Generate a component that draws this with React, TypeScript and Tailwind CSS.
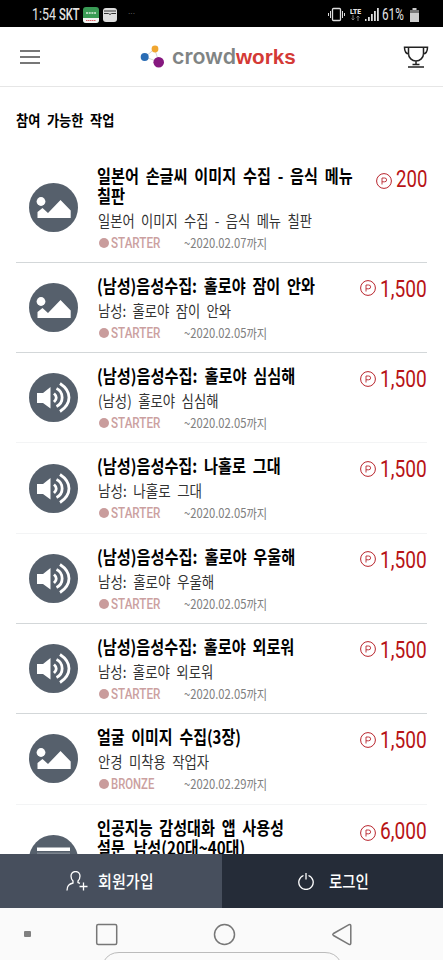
import { useLayoutEffect, useRef, useState } from "react";

type Kind = "image" | "sound" | "text";
type Line = [text: string, width: number];

interface Task {
  kind: Kind;
  title: Line[];
  desc?: Line;
  level?: Line;
  until?: string;
  price: Line;
  faint?: boolean;
}

const TASKS: Task[] = [
  { kind: "image", title: [["일본어 손글씨 이미지 수집 - 음식 메뉴", 256], ["칠판", 28]], desc: ["일본어 이미지 수집 - 음식 메뉴 칠판", 214], level: ["STARTER", 49], until: "~2020.02.07까지", price: ["200", 31] },
  { kind: "image", title: [["(남성)음성수집: 홀로야 잠이 안와", 218]], desc: ["남성: 홀로야 잠이 안와", 133], level: ["STARTER", 49], until: "~2020.02.05까지", price: ["1,500", 47] },
  { kind: "sound", title: [["(남성)음성수집: 홀로야 심심해", 198]], desc: ["(남성) 홀로야 심심해", 121], level: ["STARTER", 49], until: "~2020.02.05까지", price: ["1,500", 47], faint: true },
  { kind: "sound", title: [["(남성)음성수집: 나홀로 그대", 184]], desc: ["남성: 나홀로 그대", 104], level: ["STARTER", 49], until: "~2020.02.05까지", price: ["1,500", 47], faint: true },
  { kind: "sound", title: [["(남성)음성수집: 홀로야 우울해", 198]], desc: ["남성: 홀로야 우울해", 116], level: ["STARTER", 49], until: "~2020.02.05까지", price: ["1,500", 47] },
  { kind: "sound", title: [["(남성)음성수집: 홀로야 외로워", 197]], desc: ["남성: 홀로야 외로워", 115], level: ["STARTER", 49], until: "~2020.02.05까지", price: ["1,500", 47] },
  { kind: "image", title: [["얼굴 이미지 수집(3장)", 144]], desc: ["안경 미착용 작업자", 111], level: ["BRONZE", 43], until: "~2020.02.29까지", price: ["1,500", 47], faint: true },
  { kind: "text", title: [["인공지능 감성대화 앱 사용성", 187], ["설문_남성(20대~40대)", 148]], price: ["6,000", 47] },
];

// Condenses a single line of text to the given width
function Fit({ w, className = "", children }: { w: number; className?: string; children: string }) {
  const ref = useRef<HTMLSpanElement>(null);
  const [scale, setScale] = useState(1);
  useLayoutEffect(() => {
    if (ref.current) setScale(w / ref.current.offsetWidth);
  }, [w, children]);
  return (
    <span className={`block shrink-0 whitespace-nowrap ${className}`} style={{ width: w }}>
      <span ref={ref} className="inline-block origin-left" style={{ transform: `scaleX(${scale})` }}>{children}</span>
    </span>
  );
}

function KindIcon({ kind }: { kind: Kind }) {
  return (
    <svg viewBox="0 0 49 49" className="ml-[13px] h-[49px] w-[49px] shrink-0">
      <circle cx="24.5" cy="24.5" r="24.5" fill="#56606c" />
      {kind === "image" && (
        <g fill="#fff">
          <circle cx="12" cy="18.5" r="4.4" />
          <path d="M8.5 35V29l5-4 5.500 5L31.500 17 41.700 27.500V35z" />
        </g>
      )}
      {kind === "sound" && (
        <>
          <path d="M8 20h6L21.500 14v21.500L14 30H8z" fill="#fff" />
          <g fill="none" stroke="#fff" strokeWidth="2.800">
            <path d="M25 20.500q4.500 4 0 8.500" />
            <path d="M27.500 15.500a10 10 0 0 1 0 18" />
            <path d="M31 10.500q9 6 9 14t-9 14" />
          </g>
        </>
      )}
      {kind === "text" && (
        <>
          <path d="M8 12.500h33V16H8z" fill="#fff" />
          <path d="M8 17.500h33V20H8z" fill="#7c848e" />
        </>
      )}
    </svg>
  );
}

function TaskRow({ task }: { task: Task }) {
  const tall = task.title.length > 1;
  return (
    <li className={`flex border-b ${task.faint ? "border-[#f3f4f5]" : "border-[#d3d7d9]"} ${tall ? "h-[110.300px]" : "h-[90.300px]"}`}>
      <div className="flex w-[81px] shrink-0 items-center">
        <KindIcon kind={task.kind} />
      </div>
      <div className="flex-1 pt-[12px]">
        {task.title.map(([text, w]) => (
          <Fit key={text} w={w} className="h-5 text-[18px] leading-5 font-bold text-black [word-spacing:4px]">{text}</Fit>
        ))}
        {task.desc && <Fit w={task.desc[1]} className="mt-[5px] ml-px h-5 text-[15.500px] leading-5 text-[#333] [word-spacing:4px]">{task.desc[0]}</Fit>}
        {task.level && (
          <div className="mt-[3px] ml-[2px] flex h-5 items-center">
            <i className="h-[10px] w-[10px] rounded-full bg-[#c99c9c]" />
            <div className="ml-[2px] w-[73px]">
              <Fit w={task.level[1]} className="font-[Roboto] text-[15px] leading-5 font-medium text-[#cba0a0]">{task.level[0]}</Fit>
            </div>
            <Fit w={83} className="text-[13px] leading-5 text-[#808080]">{task.until!}</Fit>
          </div>
        )}
      </div>
      <div className="flex h-8 items-center gap-[4px] pt-[20px]">
        <svg viewBox="0 0 16 16" className={`h-4 w-4 ${tall ? "mt-[4px]" : "mb-px"}`} fill="none" stroke="#b8242c">
          <circle cx="8" cy="8" r="7.400" />
          <path d="M6 11.500V5h2.700a1.900 1.900 0 0 1 0 3.800H6" strokeWidth=".9" />
        </svg>
        <Fit w={task.price[1]} className="font-[Roboto] text-[24px] leading-6 text-[#b81416]">{task.price[0]}</Fit>
      </div>
    </li>
  );
}

function StatusBar() {
  return (
    <div className="flex h-[27px] shrink-0 items-center bg-black pt-[2px] pl-8 font-[Roboto] text-[#e4e4e4]">
      <Fit w={24} className="text-[16px]">1:54</Fit>
      <Fit w={21} className="ml-[3px] text-[16px] font-medium">SKT</Fit>
      <svg viewBox="0 0 16 16" className="ml-[3px] h-4 w-4">
        <rect width="16" height="16" rx="3" fill="#399b55" />
        <path d="M0 11h16v2a3 3 0 0 1-3 3H3a3 3 0 0 1-3-3z" fill="#f4f4f4" />
        <path d="M3 6h10" stroke="#d9eedd" strokeWidth="1.500" strokeDasharray="2 .7" />
        <path d="M3 13.500h10" stroke="#d66" strokeDasharray="1.500 .5" />
      </svg>
      <svg viewBox="0 0 14 14" className="ml-[4px] h-[14px] w-[14px]">
        <rect width="14" height="14" rx="3" fill="#ddd" />
        <path d="M1 3h12M1 5.500h4.500q1.500 2 3 0H13" fill="none" stroke="#333" />
      </svg>
      <span className="ml-[11px] text-[9px] text-[#777]">···</span>
      <svg viewBox="0 0 17 16" className="ml-auto h-4 w-[17px]" fill="none" stroke="#ddd">
        <rect x="4.500" y="1.500" width="8" height="12" rx="1" strokeWidth="1.300" />
        <path d="M2.500 4v7M.5 6v3M14.500 4v7M16.500 6v3" />
      </svg>
      <div className="ml-[5px] flex w-[11px] flex-col items-center">
        <Fit w={11} className="h-[7px] text-[8px] leading-[7px] font-black">LTE</Fit>
        <svg viewBox="0 0 9 6" className="h-[6px] w-[9px]" fill="none" stroke="#888" strokeWidth=".9">
          <path d="M2 0v5M.5 3.500 2 5l1.500-1.500M7 6V1M5.500 2.500 7 1l1.500 1.500" />
        </svg>
      </div>
      <svg viewBox="0 0 14 13" className="ml-[4px] h-[13px] w-[14px]" fill="#ddd">
        <path d="M0 11h1.500v2H0zM3 9h1.800v4H3zM6 6h1.800v7H6zM9 3h1.800v10H9zM12 0h1.800v13H12z" />
      </svg>
      <Fit w={22} className="ml-[3px] text-[16px]">61%</Fit>
      <svg viewBox="0 0 9 14" className="mr-[24px] ml-[6px] h-[14px] w-[9px]">
        <path d="M2.500 0h4v2H9v12H0V2h2.500z" fill="#ccc" />
        <path d="M0 2h9v3H0z" fill="#777" />
      </svg>
    </div>
  );
}

function Header() {
  return (
    <header className="flex h-[60px] shrink-0 items-center border-b border-[#e6e6e6] pr-[14px] pl-5">
      <div className="flex w-5 flex-col gap-1">
        <i className="h-[2px] bg-[#777]" />
        <i className="h-[2px] bg-[#777]" />
        <i className="h-[2px] bg-[#777]" />
      </div>
      <svg viewBox="0 0 24 23" className="ml-[100px] h-[23px] w-6">
        <path d="M5 12 14.500 4 19 17z" fill="none" stroke="#ccc" strokeWidth=".8" />
        <circle cx="4.700" cy="12" r="4" fill="#2a6cb4" />
        <circle cx="15" cy="4" r="3.400" fill="#f0a630" />
        <circle cx="18.700" cy="17.300" r="5.300" fill="#86187f" />
      </svg>
      <Fit w={64} className="ml-[8px] font-[Inter] text-[21px] font-semibold text-[#808484]">crowd</Fit>
      <Fit w={60} className="font-['Liberation_Sans'] text-[21px] font-bold text-[#d43a36]">works</Fit>
      <svg viewBox="0 0 26 22" className="ml-auto h-[22px] w-[26px]" fill="none" stroke="#222" strokeWidth="1.500">
        <path d="M5.500 1.200h15v6.500c0 4-3.500 7.300-7.500 7.300s-7.500-3.300-7.500-7.300zM5.500 1.200H1.500c0 3.500 1.500 6.500 4.500 6.800M20.500 1.200h4c0 3.500-1.500 6.500-4.500 6.800M13 15v4M9.500 18.500h7M5 21h16" />
      </svg>
    </header>
  );
}

export default function App() {
  return (
    <div className="flex h-[960px] w-[443px] flex-col overflow-hidden bg-white font-['Noto_Sans_CJK_KR',sans-serif]">
      <StatusBar />
      <Header />
      <main className="min-h-0 flex-1 overflow-hidden px-4 pt-[22px]">
        <Fit w={98} className="h-[22px] text-[15px] leading-[22px] font-bold text-black [word-spacing:4px]">참여 가능한 작업</Fit>
        <ul className="mt-[21.500px]">
          {TASKS.map((task, i) => <TaskRow key={i} task={task} />)}
        </ul>
      </main>
      <div className="flex h-[54px] shrink-0 text-white">
        <button className="flex w-[221.500px] items-center bg-[#474f5d] pl-[66px]">
          <svg viewBox="0 0 22 20" className="h-5 w-[22px]" fill="none" stroke="#fff" strokeWidth="1.300">
            <path d="M1 19.500c0-5 2-6.500 6-7.500v-2C5.500 8.500 5 7 5 5a4.500 4.500 0 0 1 9 0c0 2-.5 3.500-2 5v1.500l2 .8M17.500 11.500v8M13.500 15.500h8" />
          </svg>
          <Fit w={56} className="ml-[10px] text-[17px] font-medium">회원가입</Fit>
        </button>
        <button className="flex flex-1 items-center bg-[#252c38] pl-[76px]">
          <svg viewBox="0 0 16 17" className="h-[17px] w-4" fill="none" stroke="#fff" strokeWidth="1.300">
            <path d="M5.500 2.500a7.200 7.200 0 1 0 5 0M8 0v6.500" />
          </svg>
          <Fit w={40} className="ml-[15px] text-[17px] font-medium">로그인</Fit>
        </button>
      </div>
      <nav className="h-[52px] shrink-0 bg-[#fafafa]">
        <svg viewBox="0 0 443 52" className="h-[52px] w-[443px]" fill="none" stroke="#777" strokeWidth="1.500">
          <rect x="24" y="23" width="7" height="6" rx="1" fill="#808080" stroke="none" />
          <rect x="96.700" y="16.500" width="20" height="20" rx="1.500" />
          <circle cx="224.500" cy="26.500" r="10" />
          <path d="M333.500 27.500q-1.500-1 0-2l15.500-8.800q1.800-.8 1.800 1v17.600q0 1.800-1.800 1z" />
          <path d="M104 53q5-8.500 15-8.500h206q10 0 15 8.500" stroke="#bbb" strokeWidth="1" />
        </svg>
      </nav>
    </div>
  );
}
